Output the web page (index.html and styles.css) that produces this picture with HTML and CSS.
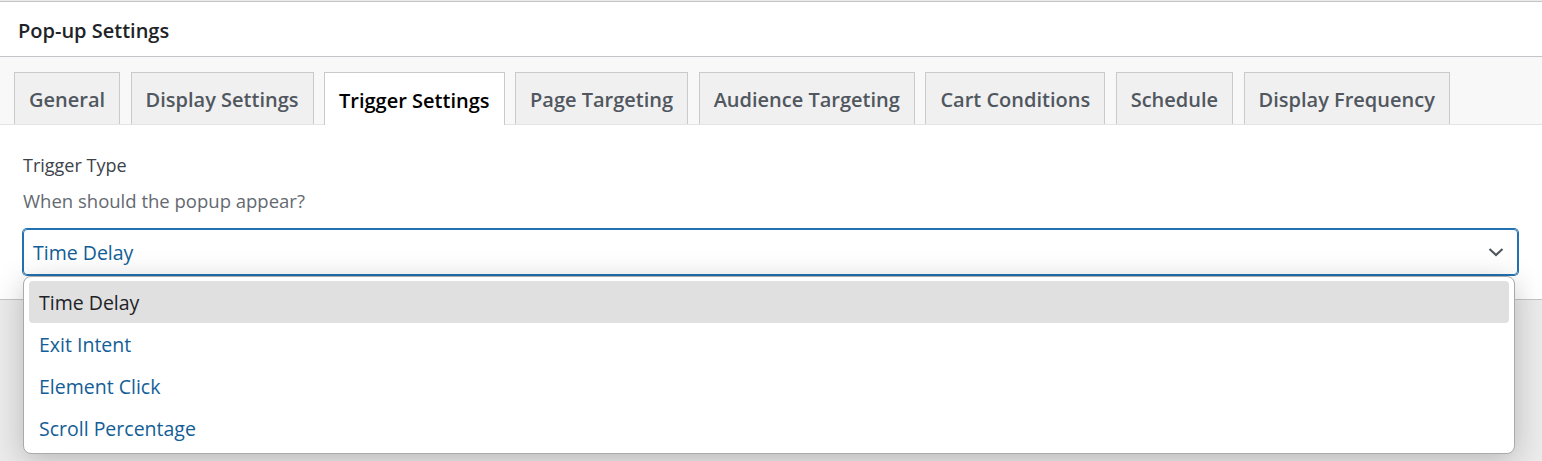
FILE: index.html
```html
<!DOCTYPE html>
<html lang="en">
<head>
<meta charset="UTF-8">
<meta name="viewport" content="width=device-width, initial-scale=1.0">
<title>Pop-up Settings</title>
<link rel="stylesheet" href="styles.css">
</head>
<body>

<div class="postbox">
    <h2 class="postbox-title">Pop-up Settings</h2>

    <nav class="nav-tabs">
        <a class="nav-tab">General</a>
        <a class="nav-tab">Display Settings</a>
        <a class="nav-tab active">Trigger Settings</a>
        <a class="nav-tab">Page Targeting</a>
        <a class="nav-tab">Audience Targeting</a>
        <a class="nav-tab">Cart Conditions</a>
        <a class="nav-tab">Schedule</a>
        <a class="nav-tab">Display Frequency</a>
    </nav>

    <div class="tab-content">
        <label class="field-label">Trigger Type</label>
        <p class="field-desc">When should the popup appear?</p>

        <div class="select-wrap">
            <div class="select-box">
                <span>Time Delay</span>
                <svg class="chevron" width="18" height="18" viewBox="0 0 18 18">
                    <polyline points="2.5,6 9,12 15.5,6" fill="none" stroke="#50575e" stroke-width="2.2" />
                </svg>
            </div>

            <!-- open option list -->
            <ul class="select-menu">
                <li class="selected">Time Delay</li>
                <li>Exit Intent</li>
                <li>Element Click</li>
                <li>Scroll Percentage</li>
            </ul>
        </div>
    </div>
</div>

</body>
</html>
```

FILE: styles.css
```css
html {
    height: 100%;
}

body {
    margin: 0;
    padding-top: 1px;
    box-sizing: border-box;
    min-height: 100%;
    background-color: #ebebeb;
    font-family: "Open Sans", "Noto Sans", sans-serif;
}

.postbox {
    background-color: #fff;
    border-top: 1px solid #c3c4c7;
    border-bottom: 1px solid #c3c4c7;
}

.postbox-title {
    margin: 0;
    box-sizing: border-box;
    height: 55px;
    padding: 3px 18px 0;
    display: flex;
    align-items: center;
    font-size: 20px;
    font-weight: 600;
    color: #1d2327;
    border-bottom: 1px solid #c3c4c7;
}

.nav-tabs {
    display: flex;
    gap: 10.5px;
    padding: 15px 14px 0;
    background-color: #f8f8f8;
    border-bottom: 1px solid #e4e4e4;
}

.nav-tab {
    display: flex;
    align-items: center;
    box-sizing: border-box;
    height: 52px;
    padding: 2px 14px 0;
    margin-bottom: -1px;
    background-color: #f0f0f1;
    border: 1px solid #c9cacc;
    border-bottom: none;
    color: #50575e;
    font-size: 20px;
    font-weight: 600;
    cursor: pointer;
}

.nav-tab.active {
    background-color: #fff;
    color: #000;
    height: 53px;
}

.tab-content {
    padding: 27px 24px 24px 23px;
}

.field-label {
    display: block;
    font-size: 18px;
    line-height: 26px;
    color: #3c434a;
}

.field-desc {
    margin: 10px 0 15px;
    font-size: 18.5px;
    line-height: 26px;
    color: #646970;
}

.select-wrap {
    position: relative;
}

.select-box {
    display: flex;
    align-items: center;
    justify-content: space-between;
    box-sizing: border-box;
    height: 46px;
    padding: 0 12px 0 9px;
    border: 1px solid #2271b1;
    border-radius: 4px;
    box-shadow: 0 0 0 1px #2271b1;
    font-size: 19.5px;
    color: #135e96;
}

.select-menu {
    position: absolute;
    z-index: 10;
    top: 47px;
    left: 0;
    right: 3px;
    margin: 0;
    padding: 4px 5px;
    list-style: none;
    background-color: #fff;
    border: 1px solid #aaa;
    border-radius: 8px;
    box-shadow: 0 6px 30px rgba(0, 0, 0, 0.22);
}

.select-menu li {
    height: 42px;
    line-height: 43px;
    padding: 0 10px;
    border-radius: 4px;
    font-size: 19.5px;
    color: #135e96;
}

.select-menu li.selected {
    background-color: #e0e0e0;
    color: #1d2327;
}
```
